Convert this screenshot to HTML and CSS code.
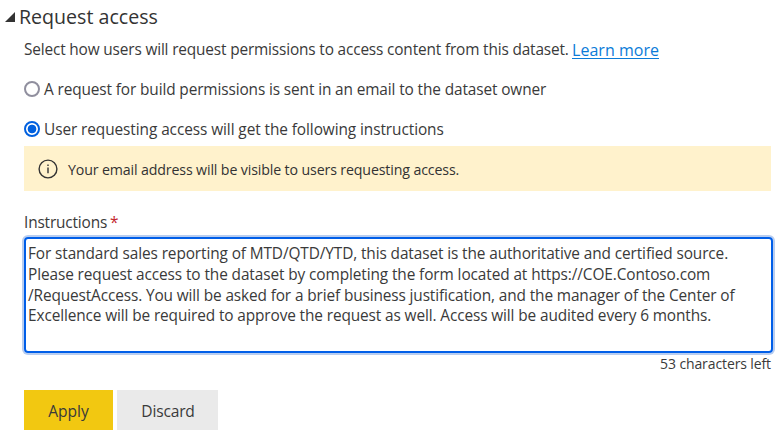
FILE: index.html
```
<!DOCTYPE html>
<html lang="en">
<head>
<meta charset="utf-8">
<title>Request access</title>
<link rel="stylesheet" href="styles.css">
</head>
<body>
<section class="panel">
  <header class="heading">
    <svg class="caret" viewBox="0 0 10 10"><path d="M10 0V10H0Z"/></svg>
    <h1>Request access</h1>
  </header>
  <div class="content">
    <p class="intro"><span>Select how users will request permissions to access content from this dataset.</span> <a href="#">Learn more</a></p>
    <div class="options">
      <div class="option owner"><i class="radio"></i><span>A request for build permissions is sent in an email to the dataset owner</span></div>
      <div class="option custom"><i class="radio checked"></i><span>User requesting access will get the following instructions</span></div>
    </div>
    <div class="notice">
      <svg class="info" viewBox="0 0 20 20"><circle cx="10" cy="10" r="8.9"/><path d="M10 8.4V14.2"/><path d="M10 5.4V6.9"/></svg>
      <span>Your email address will be visible to users requesting access.</span>
    </div>
    <div class="label">Instructions <b>*</b></div>
    <div class="textarea">
      <div class="l1">For standard sales reporting of MTD/QTD/YTD, this dataset is the authoritative and certified source.</div>
      <div class="l2">Please request access to the dataset by completing the form located at https://COE.Contoso.com</div>
      <div class="l3">/RequestAccess. You will be asked for a brief business justification, and the manager of the Center of</div>
      <div class="l4">Excellence will be required to approve the request as well. Access will be audited every 6 months.</div>
    </div>
    <div class="counter">53 characters left</div>
    <div class="actions">
      <div class="button apply">Apply</div>
      <div class="button discard">Discard</div>
    </div>
  </div>
</section>
</body>
</html>
```
FILE: styles.css
```
* { box-sizing: border-box; }
body {
  margin: 0;
  background: #fff;
  color: #3a3a3a;
  font: 15.4px/30px "Open Sans", "Noto Sans", sans-serif;
  white-space: nowrap;
  overflow: hidden;
}
.heading { display: flex; align-items: center; height: 34px; padding-left: 5px; }
.caret { width: 10px; height: 10px; margin-right: 4px; fill: #333; }
h1 { margin: 0; font-size: 19.6px; line-height: 34px; font-weight: 400; color: #333; }
.content { width: 771px; padding-left: 24px; }
.intro { display: flex; margin: 0; height: 30px; line-height: 32px; }
.intro span { letter-spacing: -.16px; width: 548px; }
.intro a { font-size: 16px; letter-spacing: .03px; color: #0b7bd8; text-decoration: underline; text-decoration-thickness: 1px; text-underline-offset: 2px; }
.options { display: grid; gap: 8px; padding: 9px 0 1px; }
.option { display: flex; align-items: center; height: 32px; gap: 4px; }
.option span { padding-top: 2px; }
.owner span { letter-spacing: -.12px; }
.custom { letter-spacing: -.08px; }
.radio { width: 16px; height: 16px; border: 2px solid #908f9e; border-radius: 50%; background: #fff; }
.radio.checked { border-color: #0060df; background: radial-gradient(circle, #0060df 0 4px, #fff 4.7px); }
.notice { display: flex; align-items: center; height: 45px; padding-left: 14px; background: #fff2cc; font-size: 14.2px; letter-spacing: -.137px; color: #333; }
.notice span { padding-top: 3px; margin-left: 10px; }
.info { width: 20px; height: 20px; fill: none; stroke: #333; stroke-width: 1.4; }
.label { margin-top: 16px; height: 30px; line-height: 32px; letter-spacing: -.16px; }
.label b { font-weight: 400; color: #c4262e; margin-left: -1px; }
.textarea { width: 749px; height: 116px; padding: 5px 2px; border: 2px solid #005ee8; border-radius: 4px; box-shadow: 0 0 0 2px #b8cdf0; line-height: 20.8px; }
.l1 { letter-spacing: -.108px; }
.l2 { letter-spacing: -.1px; }
.l3 { letter-spacing: -.124px; }
.l4 { letter-spacing: -.116px; }
.counter { height: 20px; line-height: 22px; text-align: right; font-size: 14px; letter-spacing: -.11px; }
.actions { display: flex; gap: 4px; margin-top: 17px; }
.button { height: 40px; line-height: 43px; text-align: center; font-size: 15.6px; }
.apply { width: 89px; background: #f2c811; }
.discard { width: 101px; background: #eaeaea; letter-spacing: -.2px; padding-left: 1px; }
```
